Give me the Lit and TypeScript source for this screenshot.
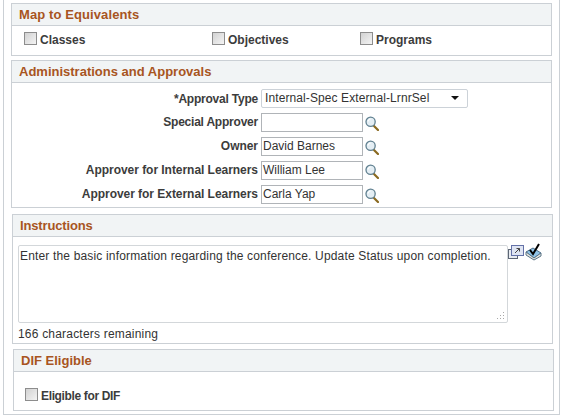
import { LitElement, html, css } from "lit";
import { customElement } from "lit/decorators.js";

const lens = html`<svg class="lens" width="14" height="15" viewBox="0 0 14 15">
  <path d="M8.5 9.5L13 14" stroke="#8a6a20" stroke-width="2.2" stroke-linecap="round"/>
  <circle cx="5.6" cy="5.8" r="4.6" fill="#e4eef4" stroke="#5f7f8f" stroke-width="1.3"/>
  <path d="M3 5.5a3 3 0 0 1 2.6-2.5" fill="none" stroke="#fff" stroke-width="1.2"/>
</svg>`;

const check = (label: string, cls = "") => html`<label class="check"><span class="box"></span><span class=${cls}>${label}</span></label>`;

const row = (label: string, value: string, cls = "") => html`
  <div class="row"><span class="lab up ${cls}">${label}</span>
    <span class="input">${value}</span>${lens}
  </div>`;

@customElement("app-root")
export class AppRoot extends LitElement {
  static styles = css`
    :host { display: block; width: 563px; height: 418px; background: #fff; overflow: hidden;
      font-family: "Liberation Sans", Arial, sans-serif; font-size: 12px; color: #333; }
    .outer { box-sizing: border-box; width: 557px; height: 415px; margin-left: 3px;
      border: 1px solid #cbd0d5; border-top: 0; padding: 3px 0 0 7px; display: flex; flex-direction: column; }
    section { box-sizing: border-box; border: 1px solid #cbd0d5; width: 541px; display: flex; flex-direction: column; }
    .s1 { height: 53px; }
    .s2 { height: 148px; margin-top: 4px; }
    .s3 { height: 130px; margin: 6px 0 0 1px; }
    .s4 { height: 62px; margin: 5px 0 0 2px; }
    h2 { margin: 0; box-sizing: border-box; height: 22px; padding: 0 0 0 7px; line-height: 21px; font-size: 13px; font-weight: bold;
      color: #a8551f; background: #f1f4f5; border-bottom: 1px solid #cbd0d5; flex: none; }
    h2.wide { letter-spacing: 0.1px; }
    h2.narrow { letter-spacing: -0.15px; }
    .checks { display: flex; padding: 7px 0 0 12px; }
    .check { display: flex; align-items: flex-start; gap: 3px; font-weight: bold; line-height: 15px; color: #3c3c3c; }
    .checks .check { width: 188px; }
    .checks .check:nth-child(2) { width: 148px; }
    .box { box-sizing: border-box; width: 13px; height: 13px; margin-top: -1px; border: 1px solid #8d8d8d;
      background: linear-gradient(135deg, #d2d2d2, #f4f4f4); flex: none; }
    .form { display: flex; flex-direction: column; gap: 5px; padding-top: 6px; }
    .row { display: flex; align-items: center; height: 19px; }
    .lab { width: 246px; flex: none; padding-right: 3px; text-align: right; font-weight: bold; color: #3c3c3c; letter-spacing: -0.04px; }
    .lab.up { padding-bottom: 2px; }
    .lab.tight { letter-spacing: -0.22px; }
    .input { box-sizing: border-box; width: 102px; height: 19px; border: 1px solid #b0b4b8; padding-left: 1px; line-height: 17px; color: #333; }
    .lens { margin-left: 2px; flex: none; margin-top: 2px; }
    .select { box-sizing: border-box; width: 207px; height: 19px; border: 1px solid #ccd2d8; border-radius: 2px; display: flex;
      align-items: center; justify-content: space-between; padding: 0 8px 1px 3px; color: #333; letter-spacing: 0.1px; }
    .arrow { width: 0; height: 0; border: 4px solid transparent; border-top: 4px solid #111; border-bottom: 0; }
    .notes { display: flex; padding: 8px 0 0 5px; }
    .area { box-sizing: border-box; width: 490px; height: 78px; border: 1px solid #d3d7da; border-radius: 2px; padding: 3px 0 0 1px;
      line-height: 14px; position: relative; letter-spacing: 0.165px; }
    .grip { position: absolute; right: 2px; bottom: 2px; }
    .icons { display: flex; gap: 1px; align-items: flex-start; margin-top: -2px; }
    .icons svg:first-child { margin-top: 2px; }
    .count { padding: 4px 0 0 5px; line-height: 14px; letter-spacing: 0.2px; }
    .dif { padding: 17px 0 0 11px; }
    .dif-label { letter-spacing: -0.35px; }
  `;

  render() {
    return html`<div class="outer">
      <section class="s1"><h2 class="wide">Map to Equivalents</h2>
        <div class="checks">${check("Classes")}${check("Objectives")}${check("Programs")}</div>
      </section>
      <section class="s2"><h2>Administrations and Approvals</h2>
        <div class="form">
          <div class="row"><span class="lab tight">*Approval Type</span>
            <span class="select"><span>Internal-Spec External-LrnrSel</span><span class="arrow"></span></span></div>
          ${row("Special Approver", "", "tight")}
          ${row("Owner", "David Barnes")}
          ${row("Approver for Internal Learners", "William Lee")}
          ${row("Approver for External Learners", "Carla Yap")}
        </div>
      </section>
      <section class="s3"><h2 class="narrow">Instructions</h2>
        <div class="notes">
          <div class="area">Enter the basic information regarding the conference. Update Status upon completion.
            <svg class="grip" width="9" height="9" viewBox="0 0 9 9" fill="#a8a8a8">
              <rect x="7" y="1" width="1" height="1"/><rect x="7" y="4" width="1" height="1"/><rect x="7" y="7" width="1" height="1"/>
              <rect x="4" y="4" width="1" height="1"/><rect x="4" y="7" width="1" height="1"/><rect x="1" y="7" width="1" height="1"/>
            </svg>
          </div>
          <div class="icons">
            <svg width="16" height="14" viewBox="0 0 16 14">
              <rect x="0.5" y="4.5" width="9" height="9" fill="#e8ecf2" stroke="#5d6675"/>
              <rect x="3.5" y="0.5" width="12" height="10" fill="#dfe5f3" stroke="#6472a8"/>
              <path d="M7 8L11.5 3.5M8.5 3.5h3v3" fill="none" stroke="#444" stroke-width="1"/>
            </svg>
            <svg width="17" height="18" viewBox="0 0 17 18">
              <path d="M1 9L8 5l8 5-7 5z" fill="#8fc3e6" stroke="#4d6f8a"/>
              <path d="M1 9v3l8 5 7-4v-3l-7 5z" fill="#e8e8e0" stroke="#5a7488"/>
              <path d="M5 7l3 4 6-10" fill="none" stroke="#000" stroke-width="2"/>
            </svg>
          </div>
        </div>
        <div class="count">166 characters remaining</div>
      </section>
      <section class="s4"><h2>DIF Eligible</h2>
        <div class="dif">${check("Eligible for DIF", "dif-label")}</div>
      </section>
    </div>`;
  }
}
